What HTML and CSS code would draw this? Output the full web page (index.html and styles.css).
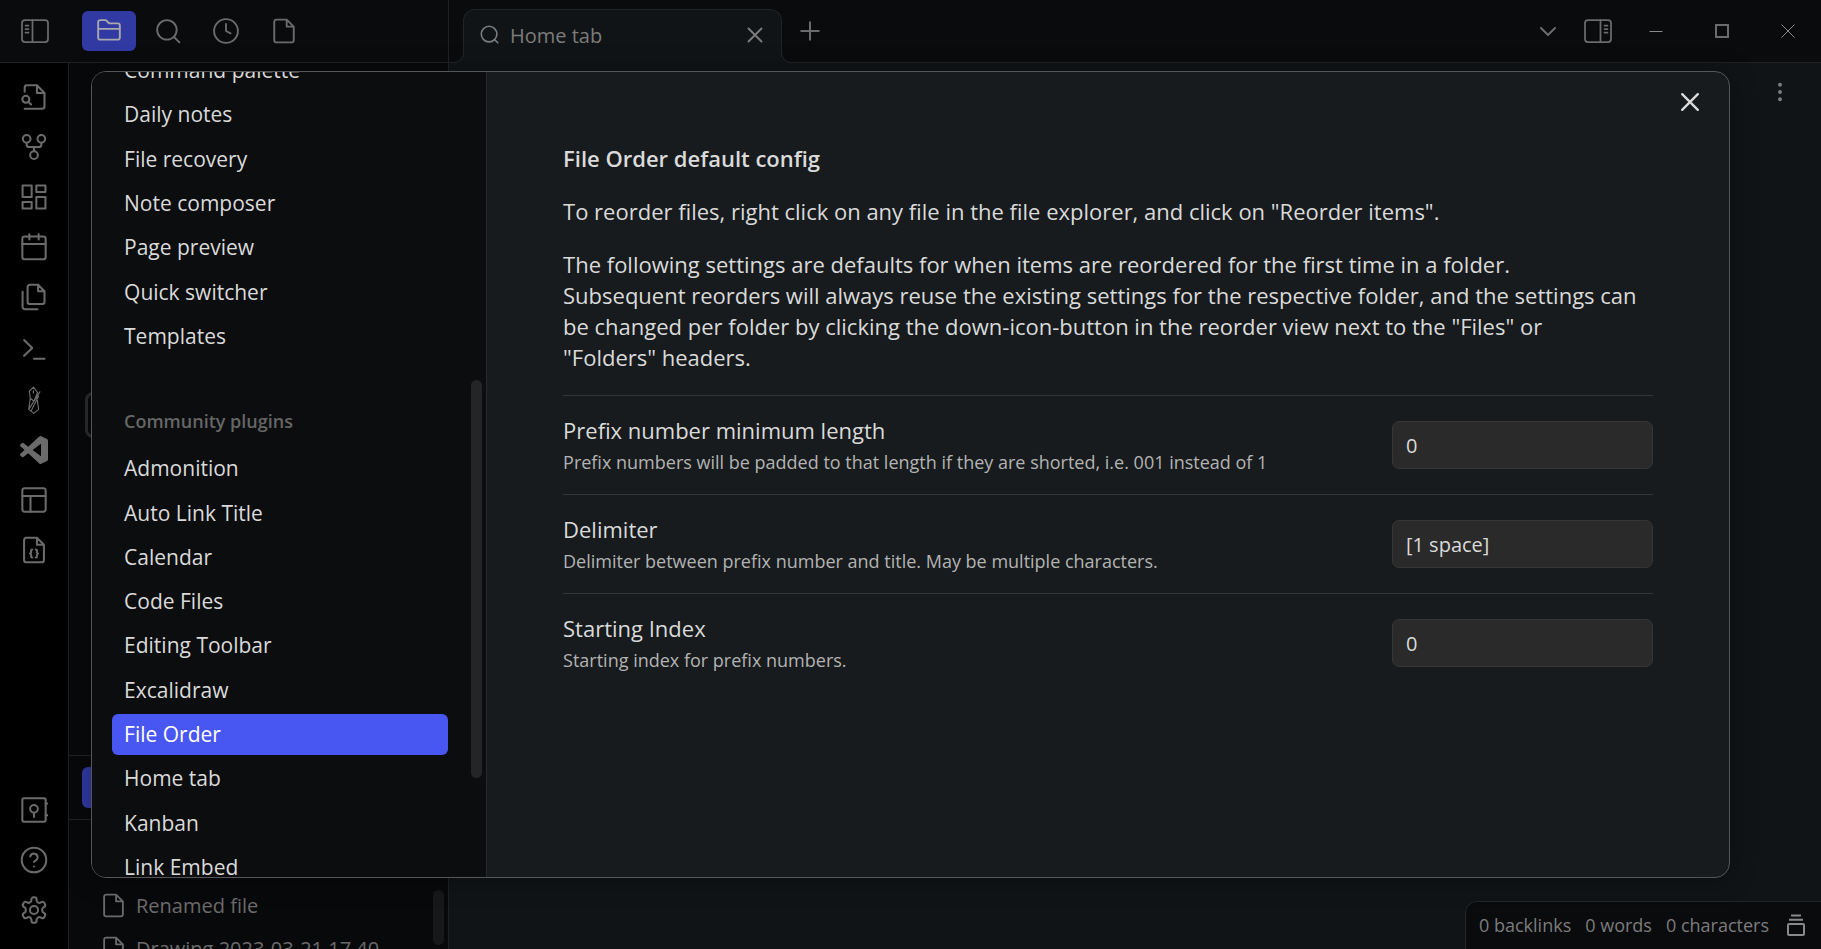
FILE: index.html
```html
<!DOCTYPE html>
<html lang="en">
<head>
<meta charset="utf-8">
<meta name="viewport" content="width=device-width, initial-scale=1">
<title>File Order settings</title>
<link rel="stylesheet" href="styles.css">
</head>
<body>
<div class="app">
  <header class="titlebar">
    <div class="titlebar-left">
      <button class="icon-btn toggle-left" aria-label="Collapse left sidebar"><svg class="icon" viewBox="0 0 28 28"><rect x="1" y="3" width="26" height="22" rx="3"/><path d="M11.500 3v22M4.500 8.500h3M4.500 12h3M4.500 15.500h3"/></svg></button>
      <div class="side-tabs">
        <button class="side-tab is-active" aria-label="Files"><svg class="icon" viewBox="0 0 24 24"><path d="M20 20H4a2 2 0 0 1-2-2V4a2 2 0 0 1 2-2h4.500a2 2 0 0 1 1.300.5l1.700 1.900a2 2 0 0 0 1.300.6H20a2 2 0 0 1 2 2V18a2 2 0 0 1-2 2zM2 10h20"/></svg></button>
        <button class="side-tab" aria-label="Search"><svg class="icon" viewBox="0 0 24 24"><circle cx="11" cy="11" r="9"/><path d="m22.500 22.500-5-5"/></svg></button>
        <button class="side-tab" aria-label="Recent files"><svg class="icon" viewBox="0 0 24 24"><circle cx="12" cy="12" r="11"/><path d="M12 5.500V12l4.200 2.200"/></svg></button>
        <button class="side-tab" aria-label="File"><svg class="icon" viewBox="0 0 24 24"><path d="M14.500 1.500H5a2 2 0 0 0-2 2v17a2 2 0 0 0 2 2h14a2 2 0 0 0 2-2V8zM14.500 1.500V8H21"/></svg></button>
      </div>
    </div>
    <div class="titlebar-main">
      <div class="tab">
        <svg class="icon icon-sm" viewBox="0 0 24 24"><circle cx="11" cy="11" r="8.500"/><path d="m20.500 20.500-3.600-3.600"/></svg>
        <span class="tab-title">Home tab</span>
        <button class="icon-btn tab-close" aria-label="Close tab"><svg class="icon" viewBox="0 0 24 24"><path d="M18 6 6 18M6 6l12 12"/></svg></button>
      </div>
      <button class="icon-btn tab-new" aria-label="New tab"><svg class="icon" viewBox="0 0 24 24"><path d="M12 4.500v15M4.500 12h15"/></svg></button>
      <div class="title-actions">
        <button class="icon-btn" aria-label="Tab list"><svg class="icon" viewBox="0 0 24 24"><path d="m6 9.500 6 6 6-6"/></svg></button>
        <button class="icon-btn toggle-right" aria-label="Expand right sidebar"><svg class="icon" viewBox="0 0 28 28"><rect x="1" y="3" width="26" height="22" rx="3"/><path d="M16.500 3v22M20.500 8.500h3M20.500 12h3M20.500 15.500h3"/></svg></button>
      </div>
      <div class="window-controls">
        <button class="window-btn" aria-label="Minimize"><svg viewBox="0 0 16 16"><path d="M1.500 8.500h13"/></svg></button>
        <button class="window-btn" aria-label="Maximize"><svg class="bold" viewBox="0 0 16 16"><path d="M2 2h12v12H2z"/></svg></button>
        <button class="window-btn" aria-label="Close"><svg viewBox="0 0 16 16"><path d="M1.500 1.500l13 13M14.500 1.500l-13 13"/></svg></button>
      </div>
    </div>
  </header>

  <div class="workspace">
    <aside class="ribbon">
      <div class="ribbon-group">
        <button class="icon-btn" aria-label="Open quick switcher"><svg class="icon" viewBox="0 0 24 24"><path d="M4 7.500V4a2 2 0 0 1 2-2h8.500L21 8.500V20a2 2 0 0 1-2 2H4M14.500 2v6.500H21"/><circle cx="5" cy="14" r="3"/><path d="m9.500 18.500-2.200-2.200"/></svg></button>
        <button class="icon-btn" aria-label="Open graph view"><svg class="icon" viewBox="0 0 24 24"><circle cx="12" cy="19" r="3.300"/><circle cx="5.700" cy="5" r="3.300"/><circle cx="18.300" cy="5" r="3.300"/><path d="M18.300 8.500v1.500a2 2 0 0 1-2 2H7.700a2 2 0 0 1-2-2V8.500M12 12v3.500"/></svg></button>
        <button class="icon-btn" aria-label="Create new canvas"><svg class="icon" viewBox="0 0 24 24"><path d="M2.200 2.200h7.800v9.800H2.200zM14 2.200h7.800v5.500H14zM14 12h7.800v9.800H14zM2.200 16.300h7.800v5.500H2.200z"/></svg></button>
        <button class="icon-btn" aria-label="Open today's daily note"><svg class="icon" viewBox="0 0 24 24"><rect x="2" y="3" width="20" height="19.500" rx="2"/><path d="M16 1v4.500M8 1v4.500M2 9.500h20"/></svg></button>
        <button class="icon-btn" aria-label="Insert template"><svg class="icon" viewBox="0 0 24 24"><path d="M15.500 1.500H8.500a2 2 0 0 0-2 2v12.500a2 2 0 0 0 2 2h10.500a2 2 0 0 0 2-2V7zM15.500 1.500V7H21M2.200 7.500v13a2 2 0 0 0 2 2H15"/></svg></button>
      </div>
      <div class="ribbon-group">
        <button class="icon-btn" aria-label="Open command palette"><svg class="icon" viewBox="0 0 24 24"><path d="m3.500 17 7-6.800-7-6.700M12 19.500h9"/></svg></button>
        <button class="icon-btn" aria-label="New drawing"><svg class="icon fine" viewBox="0 0 24 24"><path d="M11.500 1 8 4.500l.8 6L12 13l3-7.500zM8.800 10.500 7.500 20l4.300 3.500 4.200-3.500-1.500-10M17 5 7.500 20M16 8.500 9.500 21.500M11.500 4v2"/></svg></button>
        <button class="icon-btn" aria-label="Open in VS Code"><svg class="icon solid" viewBox="0 0 24 24"><path d="M23.150 2.587 18.210.21a1.494 1.494 0 0 0-1.705.29l-9.460 8.630-4.120-3.128a1 1 0 0 0-1.276.057L.327 7.261A1 1 0 0 0 .326 8.740L3.899 12 .326 15.260a1 1 0 0 0 .001 1.479L1.650 17.940a1 1 0 0 0 1.276.057l4.120-3.128 9.460 8.630a1.492 1.492 0 0 0 1.704.29l4.942-2.377A1.500 1.500 0 0 0 24 20.060V3.939a1.500 1.500 0 0 0-.85-1.352zm-5.146 14.861L10.826 12l7.178-5.448z"/></svg></button>
        <button class="icon-btn" aria-label="Create new board"><svg class="icon" viewBox="0 0 24 24"><rect x="2" y="2" width="20" height="20" rx="2"/><path d="M2 8.500h20M9 22V8.500"/></svg></button>
        <button class="icon-btn" aria-label="Create code file"><svg class="icon" viewBox="0 0 24 24"><path d="M14.500 1.500H5.500a2 2 0 0 0-2 2v17a2 2 0 0 0 2 2h13a2 2 0 0 0 2-2V7.500zM14.500 1.500v6h6M10.500 11.500a1 1 0 0 0-1 1v1.500a1 1 0 0 1-1 1 1 1 0 0 1 1 1v1.500a1 1 0 0 0 1 1M13.500 18.500a1 1 0 0 0 1-1V16a1 1 0 0 1 1-1 1 1 0 0 1-1-1v-1.500a1 1 0 0 0-1-1"/></svg></button>
      </div>
      <div class="ribbon-group ribbon-bottom">
        <button class="icon-btn" aria-label="Open another vault"><svg class="icon" viewBox="0 0 24 24"><rect x="2" y="2" width="20" height="20" rx="1.500"/><circle cx="12" cy="11" r="3.300"/><path d="M12 14.300V18M22 6.500h1.500M22 16.500h1.500"/></svg></button>
        <button class="icon-btn" aria-label="Help"><svg class="icon" viewBox="0 0 24 24"><circle cx="12" cy="12" r="10.500"/><path d="M8.800 9a3.200 3.200 0 0 1 6.300 1c0 2.200-3.100 3-3.100 3.800M12 17.500h.01"/></svg></button>
        <button class="icon-btn" aria-label="Settings"><svg class="icon" viewBox="0 0 24 24"><path d="M12.220 1h-.44a2 2 0 0 0-2 2v.6a2 2 0 0 1-1 1.730l-.43.250a2 2 0 0 1-2 0l-.5-.3a2 2 0 0 0-2.730.73l-.4.700a2 2 0 0 0 .73 2.730l.5.300a2 2 0 0 1 1 1.720v1a2 2 0 0 1-1 1.740l-.5.300a2 2 0 0 0-.73 2.730l.4.700a2 2 0 0 0 2.730.73l.5-.3a2 2 0 0 1 2 0l.43.250a2 2 0 0 1 1 1.730V21a2 2 0 0 0 2 2h.44a2 2 0 0 0 2-2v-.6a2 2 0 0 1 1-1.730l.43-.25a2 2 0 0 1 2 0l.5.300a2 2 0 0 0 2.730-.73l.4-.7a2 2 0 0 0-.73-2.730l-.5-.3a2 2 0 0 1-1-1.740v-1a2 2 0 0 1 1-1.720l.5-.3a2 2 0 0 0 .73-2.730l-.4-.7a2 2 0 0 0-2.730-.73l-.5.300a2 2 0 0 1-2 0l-.43-.25a2 2 0 0 1-1-1.730V3a2 2 0 0 0-2-2z"/><circle cx="12" cy="12" r="3.500"/></svg></button>
      </div>
    </aside>

    <aside class="explorer">
      <div class="explorer-body"><div class="explorer-focus"></div></div>
      <div class="explorer-tabs"><div class="explorer-tab"></div></div>
      <div class="file-area">
        <div class="file-list">
          <a class="file" href="#"><svg class="icon" viewBox="0 0 24 24"><path d="M14.500 1.500H5a2 2 0 0 0-2 2v17a2 2 0 0 0 2 2h14a2 2 0 0 0 2-2V8zM14.500 1.500V8H21"/></svg>Renamed file</a>
          <a class="file" href="#"><svg class="icon" viewBox="0 0 24 24"><path d="M14.500 1.500H5a2 2 0 0 0-2 2v17a2 2 0 0 0 2 2h14a2 2 0 0 0 2-2V8zM14.500 1.500V8H21"/></svg>Drawing 2023-03-21 17.40</a>
        </div>
        <div class="file-thumb"></div>
      </div>
    </aside>

    <main class="pane">
      <button class="icon-btn pane-menu" aria-label="More options"><svg class="icon solid" viewBox="0 0 24 24"><circle cx="12" cy="5.700" r="1.700"/><circle cx="12" cy="12" r="1.700"/><circle cx="12" cy="18.300" r="1.700"/></svg></button>
      <footer class="statusbar">
        <span class="status-item">0 backlinks</span>
        <span class="status-item">0 words</span>
        <span class="status-item">0 characters</span>
        <svg class="status-icon" viewBox="0 0 20 24"><rect x="2" y="11" width="16" height="11" rx="1"/><path d="M5 2.500h10M3 6.800h14"/></svg>
      </footer>
    </main>
  </div>

  <div class="modal" role="dialog" aria-label="Settings">
    <nav class="modal-nav">
      <div class="nav-scroll">
        <div class="nav-list">
          <a class="nav-item" href="#">Command palette</a>
          <a class="nav-item" href="#">Daily notes</a>
          <a class="nav-item" href="#">File recovery</a>
          <a class="nav-item" href="#">Note composer</a>
          <a class="nav-item" href="#">Page preview</a>
          <a class="nav-item" href="#">Quick switcher</a>
          <a class="nav-item" href="#">Templates</a>
        </div>
        <div class="nav-heading">Community plugins</div>
        <div class="nav-list">
          <a class="nav-item" href="#">Admonition</a>
          <a class="nav-item" href="#">Auto Link Title</a>
          <a class="nav-item" href="#">Calendar</a>
          <a class="nav-item" href="#">Code Files</a>
          <a class="nav-item" href="#">Editing Toolbar</a>
          <a class="nav-item" href="#">Excalidraw</a>
          <a class="nav-item is-active" href="#">File Order</a>
          <a class="nav-item" href="#">Home tab</a>
          <a class="nav-item" href="#">Kanban</a>
          <a class="nav-item" href="#">Link Embed</a>
        </div>
      </div>
      <div class="nav-thumb"></div>
    </nav>
    <section class="modal-content">
      <button class="icon-btn modal-close" aria-label="Close settings"><svg class="icon" viewBox="0 0 24 24"><path d="M18.700 5.300 5.300 18.700M5.300 5.300l13.400 13.400"/></svg></button>
      <h2 class="title">File Order default config</h2>
      <p class="intro">To reorder files, right click on any file in the file explorer, and click on "Reorder items".</p>
      <p class="intro">The following settings are defaults for when items are reordered for the first time in a folder.<br>
        Subsequent reorders will always reuse the existing settings for the respective folder, and the settings can be changed per folder by clicking the down-icon-button in the reorder view next to the "Files" or<br>
        "Folders" headers.</p>
      <div class="setting">
        <div class="setting-info">
          <label class="setting-name" for="prefix">Prefix number minimum length</label>
          <div class="setting-desc">Prefix numbers will be padded to that length if they are shorted, i.e. 001 instead of 1</div>
        </div>
        <input class="setting-input" id="prefix" type="text" value="0">
      </div>
      <div class="setting">
        <div class="setting-info">
          <label class="setting-name" for="delimiter">Delimiter</label>
          <div class="setting-desc">Delimiter between prefix number and title. May be multiple characters.</div>
        </div>
        <input class="setting-input" id="delimiter" type="text" value="[1 space]">
      </div>
      <div class="setting">
        <div class="setting-info">
          <label class="setting-name" for="start">Starting Index</label>
          <div class="setting-desc">Starting index for prefix numbers.</div>
        </div>
        <input class="setting-input" id="start" type="text" value="0">
      </div>
    </section>
  </div>
</div>
</body>
</html>
```
FILE: styles.css
```css
* { box-sizing: border-box; }

body {
  margin: 0;
  background: #0a0b0d;
  color: #dadada;
  font-family: "Open Sans", "Noto Sans", sans-serif;
  font-size: 21px;
}

a { color: inherit; text-decoration: none; }

button {
  display: flex;
  align-items: center;
  justify-content: center;
  padding: 0;
  border: 0;
  background: none;
  color: inherit;
  font: inherit;
}

.icon {
  width: 28px;
  height: 28px;
  flex: none;
  fill: none;
  stroke: currentColor;
  stroke-width: 1.75;
  stroke-linecap: round;
  stroke-linejoin: round;
}
.icon-sm { width: 22px; height: 22px; }
.icon.fine { stroke-width: 1; }
.icon.solid { fill: currentColor; stroke: none; }

.app {
  position: relative;
  display: flex;
  flex-direction: column;
  height: 100vh;
  overflow: hidden;
  color: #6b6b6b;
}

/* Title bar */
.titlebar {
  display: flex;
  flex: none;
  height: 63px;
  background: #0a0b0d;
}
.titlebar-left {
  display: flex;
  align-items: center;
  gap: 33px;
  width: 449px;
  padding: 0 0 1px 21px;
  border-right: 1px solid #1f2124;
  border-bottom: 1px solid #1f2124;
}
.side-tabs { display: flex; gap: 4px; }
.side-tab { width: 54px; height: 40px; border-radius: 6px; }
.side-tab + .side-tab { padding-left: 1px; }
.side-tab .icon { width: 26px; height: 26px; }
.side-tab.is-active { background: #3139a3; color: #a8a8ad; }

.titlebar-main {
  display: flex;
  align-items: center;
  flex: 1;
  padding-left: 14px;
  border-bottom: 1px solid #1f2124;
}
.tab {
  position: relative;
  display: flex;
  align-items: center;
  align-self: flex-end;
  width: 319px;
  height: 54px;
  margin-bottom: -1px;
  padding: 0 13px 3px 15px;
  border: 1px solid #212427;
  border-bottom: 0;
  border-radius: 12px 12px 0 0;
  background: #101416;
  color: #7c7c7c;
}
.tab::before,
.tab::after {
  content: "";
  position: absolute;
  bottom: 0;
  width: 10px;
  height: 10px;
  border-bottom: 1px solid #212427;
}
.tab::before {
  right: 100%;
  border-right: 1px solid #212427;
  border-bottom-right-radius: 10px;
  box-shadow: 3px 3px 0 #101416;
  clip-path: inset(0 -1px 0 0);
}
.tab::after {
  left: 100%;
  border-left: 1px solid #212427;
  border-bottom-left-radius: 10px;
  box-shadow: -3px 3px 0 #101416;
  clip-path: inset(0 0 0 -1px);
}
.tab-title { flex: 1; margin-left: 9px; font-size: 20px; }
.tab-close .icon { width: 26px; height: 26px; }
.tab-new { margin-left: 14px; }
.title-actions { display: flex; gap: 22px; margin-left: auto; }
.window-controls { display: flex; margin-left: 11px; }
.window-btn { width: 66px; height: 62px; }
.window-btn svg {
  width: 16px;
  height: 16px;
  fill: none;
  stroke: #8a8a8a;
  stroke-width: 1;
}
.window-btn svg.bold { stroke-width: 2; stroke: #6b6b6b; }

/* Workspace behind the dialog */
.workspace { display: flex; flex: 1; min-height: 0; }
.ribbon {
  display: flex;
  flex-direction: column;
  gap: 3px;
  width: 69px;
  padding: 9px 0 14px;
  border-right: 1px solid #1f2124;
  background: #000;
}
.ribbon-group { display: flex; flex-direction: column; }
.ribbon-group .icon-btn { height: 50px; }
.ribbon-bottom { margin-top: auto; }

.explorer {
  display: flex;
  flex-direction: column;
  width: 380px;
  border-right: 1px solid #1f2124;
  background: #08090b;
}
.explorer-body { flex: 1; padding: 329px 16px 0; }
.explorer-focus { height: 46px; border: 3px solid #2c2c2e; border-radius: 8px; }
.explorer-tabs {
  padding: 11px 13px;
  border-top: 1px solid #1f2124;
  border-bottom: 1px solid #1f2124;
}
.explorer-tab { width: 54px; height: 41px; border-radius: 6px; background: #3139a3; }
.file-area {
  display: flex;
  height: 129px;
  padding: 64px 4px 4px 32px;
}
.file-list { flex: 1; min-width: 0; }
.file {
  display: flex;
  align-items: center;
  gap: 10px;
  height: 43px;
  font-size: 20px;
  white-space: nowrap;
}
.file .icon { width: 25px; height: 25px; }
.file-thumb { width: 11px; margin-top: 6px; border-radius: 6px; background: #17181a; }

.pane {
  display: flex;
  flex-direction: column;
  align-items: flex-end;
  justify-content: space-between;
  flex: 1;
  background: #101416;
}
.pane-menu { margin: 15px 27px 0 0; }
.pane-menu .icon { fill: #7c7c7c; }
.statusbar {
  display: flex;
  align-items: center;
  gap: 14px;
  height: 48px;
  padding: 0 15px 1px 13px;
  border: 1px solid #212427;
  border-width: 1px 0 0 1px;
  border-top-left-radius: 12px;
  background: #0a0b0d;
  color: #7c7c7c;
  font-size: 18px;
}
.status-icon {
  width: 20px;
  height: 24px;
  margin-left: 3px;
  fill: none;
  stroke: #8a8a8a;
  stroke-width: 2;
}

/* Settings dialog */
.modal {
  position: absolute;
  inset: 0;
  display: flex;
  width: 90vw;
  height: 85vh;
  margin: auto;
  border: 1px solid #555657;
  border-radius: 15px;
  overflow: hidden;
  background: #171b1d;
  color: #dadada;
  box-shadow: 0 2px 28px rgba(0, 0, 0, 0.3);
}
.modal-nav {
  display: flex;
  flex: none;
  width: 395px;
  padding: 0 4px 0 20px;
  border-right: 1px solid #26292d;
  background: #0b0d0e;
  overflow: hidden;
}
.nav-scroll { flex: 1; margin-top: -22px; }
.nav-list { display: flex; flex-direction: column; gap: 3px; }
.nav-item {
  padding: 7px 12px;
  border-radius: 6px;
  line-height: 1.3;
}
.nav-item.is-active { background: #4957f2; color: #fff; }
.nav-heading {
  padding: 50px 12px 13px;
  color: #666;
  font-size: 18px;
  font-weight: 600;
  line-height: 28px;
}
.nav-thumb {
  width: 11px;
  height: 398px;
  margin: 308px 0 0 23px;
  border-radius: 6px;
  background: #242526;
}

.modal-content {
  position: relative;
  flex: 1;
  min-width: 0;
  padding: 71px 76px 0;
}
.modal-close {
  position: absolute;
  top: 16px;
  right: 25px;
}
.modal-close .icon { stroke-width: 2; }
.title { margin: 0 0 22px; font-size: 22px; font-weight: 600; line-height: 31px; }
.intro { margin: 0 0 22px; font-size: 22px; line-height: 31px; }
.setting {
  display: flex;
  align-items: center;
  gap: 20px;
  padding: 20px 0;
  border-top: 1px solid #333536;
}
.setting-info { flex: 1; }
.setting-name { display: block; font-size: 22px; line-height: 29px; }
.setting-desc { margin-top: 5px; color: #b3b3b3; font-size: 18px; line-height: 24px; }
.setting-input {
  width: 261px;
  height: 48px;
  padding: 0 13px;
  border: 1px solid #363636;
  border-radius: 7px;
  background: #2a2a2a;
  color: #dadada;
  font: inherit;
  font-size: 20px;
}
```
